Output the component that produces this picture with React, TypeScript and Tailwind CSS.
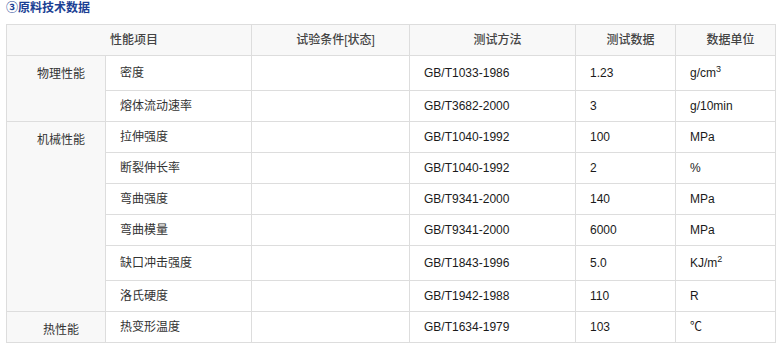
const rows: { group?: string; span?: number; name: string; cond: string; method: string; value: string; unit: React.ReactNode; tall?: boolean }[] = [
  { group: "物理性能", span: 2, name: "密度", cond: "", method: "GB/T1033-1986", value: "1.23", unit: <>g/cm<sup className="text-[9px] -top-[0.6em]">3</sup></>, tall: true },
  { name: "熔体流动速率", cond: "", method: "GB/T3682-2000", value: "3", unit: "g/10min" },
  { group: "机械性能", span: 6, name: "拉伸强度", cond: "", method: "GB/T1040-1992", value: "100", unit: "MPa" },
  { name: "断裂伸长率", cond: "", method: "GB/T1040-1992", value: "2", unit: "%" },
  { name: "弯曲强度", cond: "", method: "GB/T9341-2000", value: "140", unit: "MPa" },
  { name: "弯曲模量", cond: "", method: "GB/T9341-2000", value: "6000", unit: "MPa" },
  { name: "缺口冲击强度", cond: "", method: "GB/T1843-1996", value: "5.0", unit: <>KJ/m<sup className="text-[9px] -top-[0.6em]">2</sup></>, tall: true },
  { name: "洛氏硬度", cond: "", method: "GB/T1942-1988", value: "110", unit: "R" },
  { group: "热性能", span: 1, name: "热变形温度", cond: "", method: "GB/T1634-1979", value: "103", unit: "℃" },
];

export default function App() {
  const cell = "border border-[#dddddd] pl-[14px] text-left align-middle";
  return (
    <div
      className="w-[780px] h-[346px] bg-white text-[12px] text-[#1a1a1a]"
      style={{ fontFamily: '"Liberation Sans", "Noto Sans CJK SC", sans-serif' }}
    >
      <div className="h-[24px] pl-[6px] text-[12px] leading-[17px] font-bold text-[#1b3f94]">③原料技术数据</div>
      <table className="ml-[6px] w-[770px] table-fixed border-collapse">
        <colgroup>
          <col className="w-[99px]" />
          <col className="w-[146px]" />
          <col className="w-[158px]" />
          <col className="w-[166px]" />
          <col className="w-[100px]" />
          <col className="w-[100px]" />
        </colgroup>
        <thead>
          <tr className="h-[31px] bg-[#f8f8f8] text-[#444]">
            <th colSpan={2} className="border border-[#dddddd] pl-[10px] font-medium">性能项目</th>
            <th className="border border-[#dddddd] pl-[10px] font-medium">试验条件[状态]</th>
            <th className="border border-[#dddddd] pl-[10px] font-medium">测试方法</th>
            <th className="border border-[#dddddd] pl-[10px] font-medium">测试数据</th>
            <th className="border border-[#dddddd] pl-[10px] font-medium">数据单位</th>
          </tr>
        </thead>
        <tbody>
          {rows.map((r, i) => (
            <tr key={i} className={r.tall ? "h-[35px]" : "h-[31px]"}>
              {r.group && (
                <td rowSpan={r.span} className="border border-[#dddddd] bg-[#f8f8f8] pl-[10px] text-center align-top pt-[9px] text-[#333]">
                  {r.group}
                </td>
              )}
              <td className={`${cell} text-[#333]`}>{r.name}</td>
              <td className={cell}>{r.cond}</td>
              <td className={cell}>{r.method}</td>
              <td className={cell}>{r.value}</td>
              <td className={cell}>{r.unit}</td>
            </tr>
          ))}
        </tbody>
      </table>
    </div>
  );
}
